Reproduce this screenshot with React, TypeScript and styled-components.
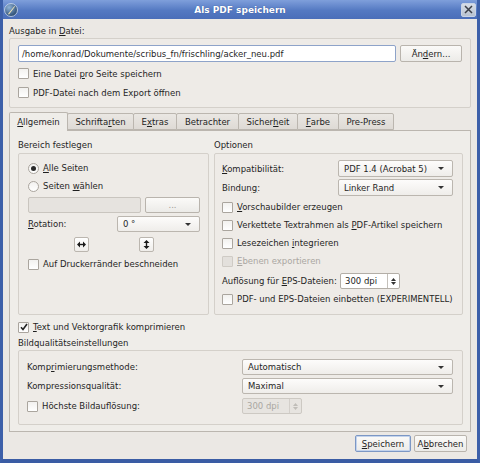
import React from 'react';
import styled, { createGlobalStyle, css } from 'styled-components';

const GlobalStyle = createGlobalStyle`
  html, body {
    margin: 0;
    padding: 0;
    background: #ffffff;
  }
  body {
    font-family: "DejaVu Sans", "Liberation Sans", sans-serif;
    font-size: 8.5px;
    color: #1f1f1f;
  }
  u {
    text-decoration: underline;
    text-underline-offset: 1px;
  }
`;

const Window = styled.div`
  width: 480px;
  height: 463px;
  box-sizing: border-box;
  display: flex;
  flex-direction: column;
  background: #3f63ad;
  border-left: 3px solid #3d60a9;
  border-right: 3px solid #3d60a9;
  border-bottom: 4px solid #3a5ca4;
  overflow: hidden;
`;

const TitleBar = styled.div`
  height: 19px;
  margin: 0 -3px;
  display: grid;
  grid-template-columns: 24px 1fr 24px;
  align-items: center;
  background: linear-gradient(#7f9fdb, #5479c2 55%, #4a6eb9);
`;

const TitleText = styled.div`
  text-align: center;
  color: #ffffff;
  font-weight: bold;
  font-size: 9px;
  text-shadow: 0 0 1px #2d4b8a;
`;

const TitleIcon = styled.div`
  display: flex;
  padding-left: 4px;
`;

const CloseButton = styled.div`
  width: 15px;
  height: 14px;
  box-sizing: border-box;
  border: 1px solid #c9d4e6;
  border-radius: 2px;
  background: linear-gradient(#d7dde6, #b8c2d1);
  display: flex;
  align-items: center;
  justify-content: center;
  justify-self: end;
  margin-right: 4px;
`;

const Body = styled.div`
  flex: 1;
  background: #ebe8e4;
  padding: 0 6px;
  display: flex;
  flex-direction: column;
`;

const Caption = styled.div<{ $top?: number }>`
  height: 14px;
  line-height: 14px;
  margin-top: ${({ $top }) => $top ?? 0}px;
  white-space: nowrap;
`;

const GroupBox = styled.div<{ $pad: string; $h?: number }>`
  border: 1px solid #d4d0ca;
  border-radius: 2px;
  background: #eeebe7;
  padding: ${({ $pad }) => $pad};
  display: flex;
  flex-direction: column;
  ${({ $h }) =>
    $h &&
    css`
      height: ${$h}px;
      box-sizing: border-box;
      margin-top: 1px;
    `}
`;

const Row = styled.div<{ $h: number; $top?: number; $gap?: number; $indent?: number }>`
  display: flex;
  align-items: center;
  height: ${({ $h }) => $h}px;
  margin-top: ${({ $top }) => $top ?? 0}px;
  gap: ${({ $gap }) => $gap ?? 0}px;
  padding-left: ${({ $indent }) => $indent ?? 0}px;
  white-space: nowrap;
`;

const LineEdit = styled.div<{ $disabled?: boolean }>`
  flex: 1;
  height: 100%;
  box-sizing: border-box;
  border: 1px solid ${({ $disabled }) => ($disabled ? '#c9c5bf' : '#8ea3c9')};
  border-radius: 2px;
  background: ${({ $disabled }) => ($disabled ? '#e6e3df' : '#ffffff')};
  padding: 0 3px;
  display: flex;
  align-items: center;
  overflow: hidden;
`;

const PushButton = styled.div<{ $w: number; $default?: boolean; $disabled?: boolean }>`
  width: ${({ $w }) => $w}px;
  height: 100%;
  box-sizing: border-box;
  border: 1px solid #b9b4ad;
  border-radius: 2px;
  background: linear-gradient(#fbfaf8, #ecebe8);
  display: flex;
  align-items: center;
  justify-content: center;
  color: ${({ $disabled }) => ($disabled ? '#9d9a95' : 'inherit')};
  ${({ $default }) =>
    $default &&
    css`
      border-color: #7c97c4;
      box-shadow: inset 0 0 0 1px #c3d3ec;
    `}
`;

const BoxMark = styled.div<{ $disabled?: boolean }>`
  width: 11px;
  height: 11px;
  box-sizing: border-box;
  flex: none;
  border: 1px solid ${({ $disabled }) => ($disabled ? '#cfcbc5' : '#aaa59e')};
  border-radius: 1px;
  background: ${({ $disabled }) =>
    $disabled ? '#e3e0dc' : 'linear-gradient(#f2f1ef, #ffffff)'};
  margin-right: 4px;
  display: flex;
  align-items: center;
  justify-content: center;
`;

const RadioMark = styled(BoxMark)`
  border-radius: 50%;
`;

const Dot = styled.div`
  width: 5px;
  height: 5px;
  border-radius: 50%;
  background: #2a2a2a;
`;

const MarkText = styled.span<{ $disabled?: boolean }>`
  color: ${({ $disabled }) => ($disabled ? '#aaa7a2' : 'inherit')};
`;

const Combo = styled.div`
  flex: 1;
  height: 100%;
  box-sizing: border-box;
  border: 1px solid #bbb6af;
  border-radius: 2px;
  background: linear-gradient(#fdfcfb, #efedea);
  padding: 0 5px;
  display: flex;
  align-items: center;
  justify-content: space-between;
`;

const Arrow = styled.span`
  width: 0;
  height: 0;
  border-left: 3px solid transparent;
  border-right: 3px solid transparent;
  border-top: 3px solid #333;
  margin-right: 3px;
`;

const Spin = styled.div<{ $disabled?: boolean }>`
  width: 60px;
  height: 100%;
  box-sizing: border-box;
  border: 1px solid ${({ $disabled }) => ($disabled ? '#cdc9c3' : '#b3aea7')};
  border-radius: 2px;
  background: ${({ $disabled }) => ($disabled ? '#e7e4e0' : '#ffffff')};
  color: ${({ $disabled }) => ($disabled ? '#aaa7a2' : 'inherit')};
  display: flex;
  align-items: stretch;
`;

const SpinValue = styled.div`
  flex: 1;
  display: flex;
  align-items: center;
  padding-left: 4px;
`;

const SpinButtons = styled.div<{ $disabled?: boolean }>`
  width: 11px;
  border-left: 1px solid ${({ $disabled }) => ($disabled ? '#d3cfca' : '#c4c0ba')};
  display: flex;
  flex-direction: column;
  align-items: center;
  justify-content: center;
  gap: 1px;
  color: ${({ $disabled }) => ($disabled ? '#c0bdb8' : '#333')};
`;

const TabBar = styled.div`
  display: flex;
  align-items: flex-end;
  height: 18px;
  margin-top: 4px;
  padding-left: 1px;
  position: relative;
  z-index: 1;
`;

const Tab = styled.div<{ $w: number; $active?: boolean }>`
  width: ${({ $w }) => $w}px;
  box-sizing: border-box;
  height: ${({ $active }) => ($active ? 19 : 17)}px;
  margin-bottom: ${({ $active }) => ($active ? -1 : 0)}px;
  border: 1px solid #bbb6af;
  border-bottom: ${({ $active }) => ($active ? 'none' : '1px solid #bbb6af')};
  border-radius: 2px 2px 0 0;
  margin-left: -1px;
  background: ${({ $active }) =>
    $active ? '#efede9' : 'linear-gradient(#eae7e3, #dedad5)'};
  display: flex;
  align-items: center;
  justify-content: center;
  padding-bottom: ${({ $active }) => ($active ? 1 : 0)}px;
`;

const TabPanel = styled.div`
  height: 302px;
  box-sizing: border-box;
  border: 1px solid #bbb6af;
  background: #efede9;
  padding: 7px 7px 6px 8px;
  display: flex;
  flex-direction: column;
`;

const Columns = styled.div`
  display: grid;
  grid-template-columns: 191px 1fr;
  column-gap: 5px;
`;

const Column = styled.div`
  display: flex;
  flex-direction: column;
`;

const FieldLabel = styled.div<{ $w: number }>`
  width: ${({ $w }) => $w}px;
  flex: none;
  display: flex;
  align-items: center;
`;

const IconButton = styled.div`
  width: 15px;
  height: 15px;
  box-sizing: border-box;
  border: 1px solid #bbb6af;
  border-radius: 2px;
  background: linear-gradient(#ffffff, #efedea);
  display: flex;
  align-items: center;
  justify-content: center;
`;

const ButtonRow = styled.div`
  display: flex;
  justify-content: flex-end;
  gap: 3px;
  height: 17px;
  margin-top: 3px;
  padding-right: 4px;
`;

const CheckBox: React.FC<{ checked?: boolean; disabled?: boolean; children: React.ReactNode }> = ({
  checked,
  disabled,
  children,
}) => (
  <>
    <BoxMark $disabled={disabled}>
      {checked && (
        <svg width="8" height="8" viewBox="0 0 8 8">
          <path d="M1 4.2 L3 6.5 L7 1" stroke="#222" strokeWidth="1.6" fill="none" />
        </svg>
      )}
    </BoxMark>
    <MarkText $disabled={disabled}>{children}</MarkText>
  </>
);

const SpinArrows: React.FC<{ disabled?: boolean }> = ({ disabled }) => (
  <SpinButtons $disabled={disabled}>
    <svg width="5" height="3" viewBox="0 0 5 3">
      <path d="M0 3 L2.5 0 L5 3 Z" fill="currentColor" />
    </svg>
    <svg width="5" height="3" viewBox="0 0 5 3">
      <path d="M0 0 L2.5 3 L5 0 Z" fill="currentColor" />
    </svg>
  </SpinButtons>
);

const tabs = [
  { label: <><u>A</u>llgemein</>, w: 59, active: true },
  { label: <>Schrifta<u>r</u>ten</>, w: 67 },
  { label: <>E<u>x</u>tras</>, w: 44 },
  { label: <>Betrachter</>, w: 63 },
  { label: <>Sicher<u>h</u>eit</>, w: 60 },
  { label: <><u>F</u>arbe</>, w: 42 },
  { label: <>Pre-Press</>, w: 56 },
];

export default function App() {
  return (
    <>
      <GlobalStyle />
      <Window>
        <TitleBar>
          <TitleIcon>
            <svg width="14" height="14" viewBox="0 0 14 14">
              <defs>
                <radialGradient id="lg" cx="0.35" cy="0.3" r="0.8">
                  <stop offset="0" stopColor="#8fb2d6" />
                  <stop offset="1" stopColor="#1e3f66" />
                </radialGradient>
              </defs>
              <circle cx="7" cy="7" r="6.5" fill="url(#lg)" stroke="#cfdcef" strokeWidth="0.8" />
              <path d="M4 11 L10.5 3 L11 3.6 L5 11.4 Z" fill="#f4e6b8" />
            </svg>
          </TitleIcon>
          <TitleText>Als PDF speichern</TitleText>
          <CloseButton>
            <svg width="9" height="9" viewBox="0 0 9 9">
              <path d="M1 1 L8 8 M8 1 L1 8" stroke="#3b3f48" strokeWidth="1.5" />
            </svg>
          </CloseButton>
        </TitleBar>
        <Body>
          <Caption $top={5}>
            Ausgabe in <u>D</u>atei:
          </Caption>
          <GroupBox $pad="6px 8px 5px 8px">
            <Row $h={17} $gap={4}>
              <LineEdit>/home/konrad/Dokumente/scribus_fn/frischling/acker_neu.pdf</LineEdit>
              <PushButton $w={62}>
                Än<u>d</u>ern...
              </PushButton>
            </Row>
            <Row $h={19} $top={2}>
              <CheckBox>
                Eine Datei <u>p</u>ro Seite speichern
              </CheckBox>
            </Row>
            <Row $h={19}>
              <CheckBox>PDF-Datei nach dem Export öffnen</CheckBox>
            </Row>
          </GroupBox>

          <TabBar>
            {tabs.map((t, i) => (
              <Tab key={i} $w={t.w} $active={t.active}>
                {t.label}
              </Tab>
            ))}
          </TabBar>
          <TabPanel>
            <Columns>
              <Column>
                <Caption>Bereich festlegen</Caption>
                <GroupBox $pad="5px 8px 0 9px" $h={162}>
                  <Row $h={18}>
                    <RadioMark>
                      <Dot />
                    </RadioMark>
                    <span>
                      <u>A</u>lle Seiten
                    </span>
                  </Row>
                  <Row $h={18}>
                    <RadioMark />
                    <span>
                      Seiten <u>w</u>ählen
                    </span>
                  </Row>
                  <Row $h={16} $top={2} $gap={4}>
                    <LineEdit $disabled />
                    <PushButton $w={55} $disabled>
                      ...
                    </PushButton>
                  </Row>
                  <Row $h={16} $top={3}>
                    <FieldLabel $w={89}>
                      <span>
                        <u>R</u>otation:
                      </span>
                    </FieldLabel>
                    <Combo>
                      <span>0 °</span>
                      <Arrow />
                    </Combo>
                  </Row>
                  <Row $h={16} $top={4} $gap={50} $indent={46}>
                    <IconButton>
                      <svg width="9" height="7" viewBox="0 0 9 7">
                        <path d="M0 3.5 L3 0.5 L3 6.5 Z M9 3.5 L6 0.5 L6 6.5 Z" fill="#1a1a1a" />
                        <rect x="2" y="2.8" width="5" height="1.4" fill="#1a1a1a" />
                      </svg>
                    </IconButton>
                    <IconButton>
                      <svg width="7" height="9" viewBox="0 0 7 9">
                        <path d="M3.5 0 L0.5 3 L6.5 3 Z M3.5 9 L0.5 6 L6.5 6 Z" fill="#1a1a1a" />
                        <rect x="2.8" y="2" width="1.4" height="5" fill="#1a1a1a" />
                      </svg>
                    </IconButton>
                  </Row>
                  <Row $h={18} $top={3}>
                    <CheckBox>Auf Druckerränder beschneiden</CheckBox>
                  </Row>
                </GroupBox>
              </Column>
              <Column>
                <Caption>Optionen</Caption>
                <GroupBox $pad="6px 9px 0 7px" $h={162}>
                  <Row $h={17}>
                    <FieldLabel $w={116}>
                      <span>
                        <u>K</u>ompatibilität:
                      </span>
                    </FieldLabel>
                    <Combo>
                      <span>PDF 1.4 (Acrobat 5)</span>
                      <Arrow />
                    </Combo>
                  </Row>
                  <Row $h={17} $top={2}>
                    <FieldLabel $w={116}>
                      <span>
                        Bindun<u>g</u>:
                      </span>
                    </FieldLabel>
                    <Combo>
                      <span>Linker Rand</span>
                      <Arrow />
                    </Combo>
                  </Row>
                  <Row $h={18} $top={2}>
                    <CheckBox>
                      <u>V</u>orschaubilder erzeugen
                    </CheckBox>
                  </Row>
                  <Row $h={18}>
                    <CheckBox>
                      Verkettete Textrahmen als <u>P</u>DF-Artikel speichern
                    </CheckBox>
                  </Row>
                  <Row $h={18}>
                    <CheckBox>
                      Lesezeichen <u>i</u>ntegrieren
                    </CheckBox>
                  </Row>
                  <Row $h={18}>
                    <CheckBox disabled>
                      <u>E</u>benen exportieren
                    </CheckBox>
                  </Row>
                  <Row $h={16} $top={3}>
                    <FieldLabel $w={118}>
                      <span>
                        Auflösung für <u>E</u>PS-Dateien:
                      </span>
                    </FieldLabel>
                    <Spin>
                      <SpinValue>300 dpi</SpinValue>
                      <SpinArrows />
                    </Spin>
                  </Row>
                  <Row $h={18} $top={1}>
                    <CheckBox>PDF- und EPS-Dateien einbetten (EXPERIMENTELL)</CheckBox>
                  </Row>
                </GroupBox>
              </Column>
            </Columns>
            <Row $h={18} $top={3}>
              <CheckBox checked>
                <u>T</u>ext und Vektorgrafik komprimieren
              </CheckBox>
            </Row>
            <Caption>Bildqualitätseinstellungen</Caption>
            <GroupBox $pad="8px 9px 10px 8px">
              <Row $h={16}>
                <FieldLabel $w={215}>
                  <span>
                    Komp<u>r</u>imierungsmethode:
                  </span>
                </FieldLabel>
                <Combo>
                  <span>Automatisch</span>
                  <Arrow />
                </Combo>
              </Row>
              <Row $h={16} $top={3}>
                <FieldLabel $w={215}>
                  <span>Kompressionsqualität:</span>
                </FieldLabel>
                <Combo>
                  <span>Maximal</span>
                  <Arrow />
                </Combo>
              </Row>
              <Row $h={16} $top={4}>
                <FieldLabel $w={215}>
                  <CheckBox>Höchste Bildauflösung:</CheckBox>
                </FieldLabel>
                <Spin $disabled>
                  <SpinValue>300 dpi</SpinValue>
                  <SpinArrows disabled />
                </Spin>
              </Row>
            </GroupBox>
          </TabPanel>
          <ButtonRow>
            <PushButton $w={56} $default>
              <span>
                <u>S</u>peichern
              </span>
            </PushButton>
            <PushButton $w={53}>
              <span>
                A<u>b</u>brechen
              </span>
            </PushButton>
          </ButtonRow>
        </Body>
      </Window>
    </>
  );
}
